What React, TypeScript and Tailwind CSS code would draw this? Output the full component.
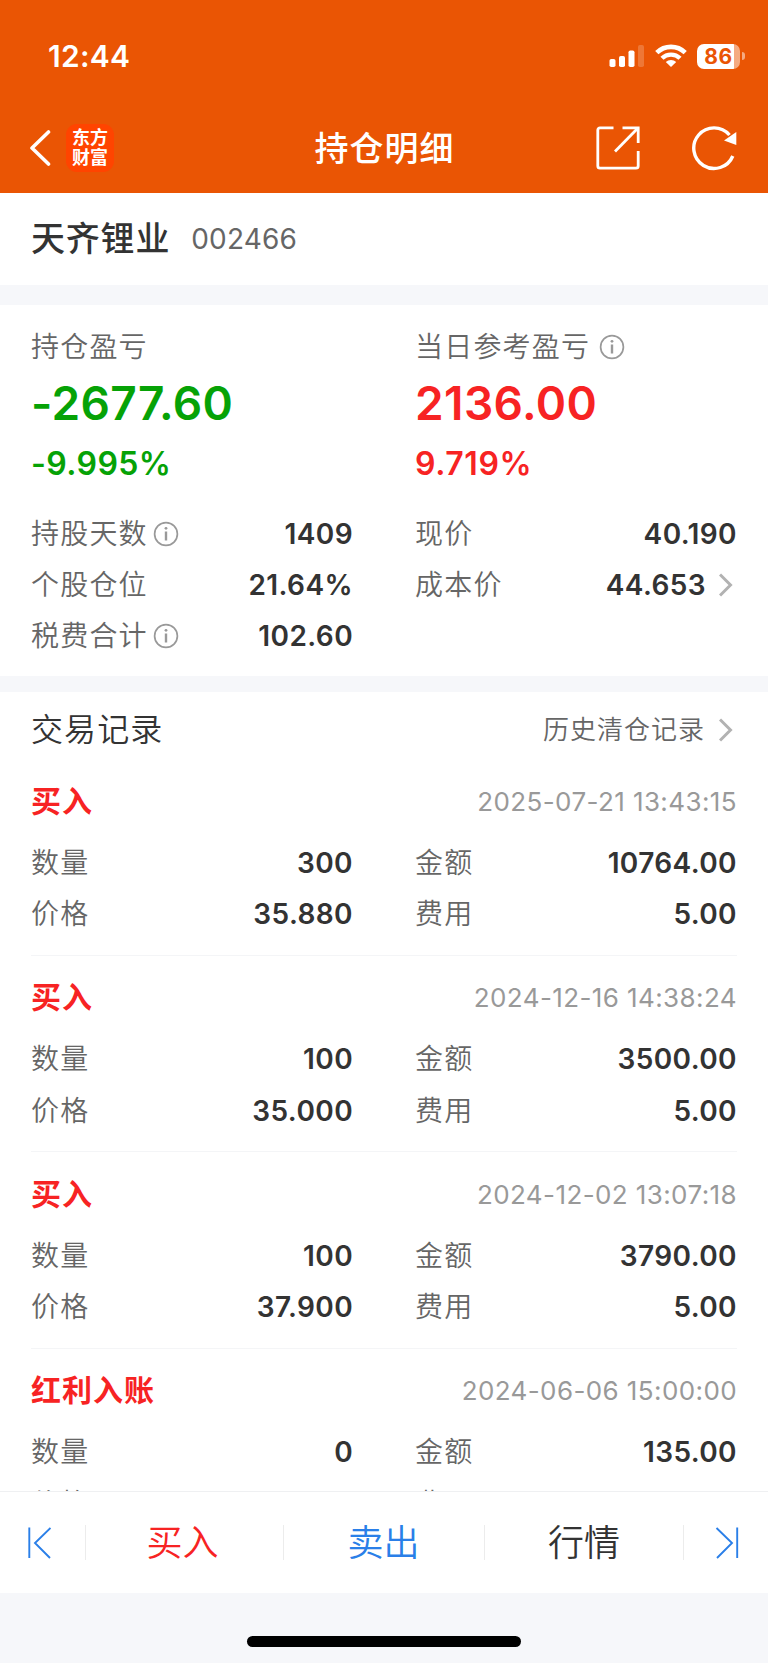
type Row = { label: string; value: string; info?: boolean; link?: boolean };

type Trade = {
  type: string;
  time: string;
  count: string;
  amount: string;
  price: string;
  fee: string;
};

const leftRows: Row[] = [
  { label: "持股天数", value: "1409", info: true },
  { label: "个股仓位", value: "21.64%" },
  { label: "税费合计", value: "102.60", info: true },
];

const rightRows: Row[] = [
  { label: "现价", value: "40.190" },
  { label: "成本价", value: "44.653", link: true },
];

const trades: Trade[] = [
  { type: "买入", time: "2025-07-21 13:43:15", count: "300", amount: "10764.00", price: "35.880", fee: "5.00" },
  { type: "买入", time: "2024-12-16 14:38:24", count: "100", amount: "3500.00", price: "35.000", fee: "5.00" },
  { type: "买入", time: "2024-12-02 13:07:18", count: "100", amount: "3790.00", price: "37.900", fee: "5.00" },
  { type: "红利入账", time: "2024-06-06 15:00:00", count: "0", amount: "135.00", price: "0.000", fee: "0.00" },
];

const InfoIcon = () => (
  <svg width="26" height="26" viewBox="0 0 26 26" fill="none" className="shrink-0">
    <circle cx="13" cy="13" r="11.4" stroke="#999" strokeWidth="1.7" />
    <path d="M13 10.5V19.5" stroke="#999" strokeWidth="2.4" />
    <circle cx="13" cy="7.3" r="1.4" fill="#999" />
  </svg>
);

const Chevron = () => (
  <svg width="14" height="24" viewBox="0 0 14 24" fill="none" className="shrink-0">
    <path d="M1 1.5L11.5 12L1 22.5" stroke="#b2b2b2" strokeWidth="3" />
  </svg>
);

const StatusBar = () => (
  <div className="flex h-[104px] items-center justify-between pt-[8px] pr-[23px] pl-12">
    <span className="text-[30px] leading-none font-semibold tracking-[0.3px]">12:44</span>
    <div className="flex items-center">
      <svg width="36" height="24" viewBox="0 0 36 24" fill="#fff">
        <rect x="0.5" y="15" width="6" height="8" rx="1.8" />
        <rect x="10" y="12" width="6" height="11" rx="1.8" />
        <rect x="19.5" y="6.5" width="6" height="16.5" rx="1.8" />
        <rect x="29" y="1" width="6" height="22" rx="1.8" opacity="0.2" />
      </svg>
      <svg width="32" height="24" viewBox="0 0 32 24" fill="none" className="ml-[10px]">
        <path d="M1.8 8.7A20.3 20.3 0 0 1 30.2 8.7" stroke="#fff" strokeWidth="4.6" />
        <path d="M7 14.3A12.8 12.8 0 0 1 25 14.3" stroke="#fff" strokeWidth="4.4" />
        <path d="M16 23L10.8 18.1A7.4 7.4 0 0 1 21.2 18.1Z" fill="#fff" />
      </svg>
      <div className="ml-[10px] flex h-[25px] w-[43px] items-center justify-center overflow-hidden rounded-[7px] bg-linear-to-r from-white from-86% to-white/50 to-86%">
        <span className="text-[21px] leading-none font-bold tracking-[0.6px] text-[#ea5504]">86</span>
      </div>
      <div className="ml-[2px] h-2 w-[3px] rounded-r-full bg-white/50" />
    </div>
  </div>
);

const NavBar = () => (
  <div className="grid h-[88px] grid-cols-3 items-center pr-[31px] pl-[29px]">
    <div className="flex items-center">
      <svg width="22" height="38" viewBox="0 0 22 38" fill="none">
        <path d="M19.5 3L3 19L19.5 35" stroke="#fff" strokeWidth="3.6" strokeLinecap="round" strokeLinejoin="round" />
      </svg>
      <div className="ml-[15px] flex h-12 w-12 flex-col items-center justify-center rounded-[11px] bg-[#ff4400] text-[18px] leading-[20px] font-bold">
        <span>东方</span>
        <span>财富</span>
      </div>
    </div>
    <h1 className="pt-[2px] pl-[3px] text-center text-[34px] leading-none font-medium tracking-[1px] whitespace-nowrap">
      持仓明细
    </h1>
    <div className="flex items-center justify-end">
      <svg width="44" height="44" viewBox="0 0 44 44" fill="none" stroke="#fff" strokeWidth="2.8">
        <path d="M17.5 1.8H4A2.2 2.2 0 0 0 1.8 4V40A2.2 2.2 0 0 0 4 42.2H40A2.2 2.2 0 0 0 42.2 40V25" />
        <path d="M26.5 1.8H42.2V17" />
        <path d="M19 25.5L41.5 2.5" />
      </svg>
      <svg width="46" height="46" viewBox="0 0 46 46" fill="none" className="ml-[51px]">
        <path d="M38.5 10A20.3 20.3 0 1 0 41.8 31" stroke="#fff" strokeWidth="3.4" />
        <path d="M45.3 7V20L33 15.5Z" fill="#fff" />
      </svg>
    </div>
  </div>
);

const DetailRow = ({ label, value, info, link }: Row) => (
  <div className="flex h-[51.3px] items-center justify-between">
    <span className="flex items-center gap-[5px] text-[28px] font-[350] tracking-[1.2px] text-[#666]">
      {label}
      {info && <InfoIcon />}
    </span>
    <span className="-mr-px flex items-center text-[28px] font-semibold tracking-[0.4px] text-[#333]">
      {value}
      {link && (
        <span className="mr-1 ml-[13px]">
          <Chevron />
        </span>
      )}
    </span>
  </div>
);

const TradeItem = ({ trade }: { trade: Trade }) => (
  <div className="mx-[31px] h-[196.4px] shrink-0 border-b border-[#f4f5f7] pt-4">
    <div className="mb-[10px] flex h-[52px] items-center justify-between">
      <span className="text-[30px] font-bold tracking-[1px] text-[#f72323]">{trade.type}</span>
      <span className="text-[26px] tracking-[0.4px] text-[#999]">{trade.time}</span>
    </div>
    <div className="grid grid-cols-2 gap-x-[63px] pr-px">
      <DetailRow label="数量" value={trade.count} />
      <DetailRow label="金额" value={trade.amount} />
      <DetailRow label="价格" value={trade.price} />
      <DetailRow label="费用" value={trade.fee} />
    </div>
  </div>
);

const Summary = () => (
  <div className="grid h-[371px] grid-cols-2 gap-x-[63px] bg-white pt-[19px] pr-8 pl-[31px]">
    <div>
      <div className="flex h-[46px] items-center text-[28px] font-[350] tracking-[1.2px] text-[#666]">
        持仓盈亏
      </div>
      <div className="flex h-[67px] items-center text-[46px] font-semibold tracking-[0.3px] text-[#06a206]">-2677.60</div>
      <div className="mb-[18px] flex h-[53px] items-center text-[32px] font-semibold tracking-[0.4px] text-[#06a206]">-9.995%</div>
      {leftRows.map((row) => (
        <DetailRow key={row.label} {...row} />
      ))}
    </div>
    <div>
      <div className="flex h-[46px] items-center gap-[9px] text-[28px] font-[350] tracking-[1.2px] text-[#666]">
        当日参考盈亏
        <InfoIcon />
      </div>
      <div className="flex h-[67px] items-center text-[46px] font-semibold tracking-[0.4px] text-[#f72323]">2136.00</div>
      <div className="mb-[18px] flex h-[53px] items-center text-[32px] font-semibold tracking-[0.6px] text-[#f72323]">9.719%</div>
      {rightRows.map((row) => (
        <DetailRow key={row.label} {...row} />
      ))}
    </div>
  </div>
);

const BottomBar = () => (
  <div className="flex h-[102px] shrink-0 items-center border-t border-[#eff0f2] bg-white text-[36px] font-[350]">
    <button className="flex h-[35px] w-[86px] items-center border-r border-[#ececec] pl-[27px]">
      <svg width="24" height="32" viewBox="0 0 24 32" fill="none" stroke="#2a7fe8" strokeWidth="1.9">
        <path d="M2.3 0.5V31M23.5 1L8 16L23 31" />
      </svg>
    </button>
    <button className="flex h-[35px] w-[198px] items-center justify-center border-r border-[#ececec] pr-1 text-[#f72323]">
      买入
    </button>
    <button className="flex h-[35px] w-[201px] items-center justify-center border-r border-[#ececec] pr-px text-[#2a7fe8]">
      卖出
    </button>
    <button className="flex h-[35px] w-[199px] items-center justify-center border-r border-[#ececec] text-[#333]">
      行情
    </button>
    <button className="flex h-[35px] flex-1 items-center pl-[31px]">
      <svg width="24" height="32" viewBox="0 0 24 32" fill="none" stroke="#2a7fe8" strokeWidth="1.9">
        <path d="M22.2 0.5V31M1.5 1L17 16L2 31" />
      </svg>
    </button>
  </div>
);

const App = () => {
  return (
    <div className="flex h-[1663px] w-[768px] flex-col overflow-hidden bg-[#f6f7fa] font-[Inter,'Noto_Sans_CJK_SC',sans-serif]">
      <header className="h-[192.5px] shrink-0 bg-[#ea5504] text-white">
        <StatusBar />
        <NavBar />
      </header>

      {/* Stock name */}
      <div className="mb-5 flex h-[92.5px] shrink-0 items-center gap-[21px] bg-white px-[31px]">
        <span className="text-[34px] font-medium tracking-[0.8px] text-[#333]">天齐锂业</span>
        <span className="text-[28px] tracking-[0.2px] text-[#666]">002466</span>
      </div>

      <Summary />

      {/* Trade records */}
      <div className="mt-4 flex min-h-0 flex-1 flex-col overflow-hidden bg-white">
        <div className="flex h-[67.4px] shrink-0 items-center justify-between px-[31px] pt-[8px]">
          <span className="text-[32px] font-[350] tracking-[1.1px] text-[#333]">交易记录</span>
          <span className="flex items-center text-[26px] font-[350] tracking-[1px] text-[#666]">
            历史清仓记录
            <span className="mr-1 ml-[14px]">
              <Chevron />
            </span>
          </span>
        </div>
        {trades.map((trade) => (
          <TradeItem key={trade.time} trade={trade} />
        ))}
      </div>

      <BottomBar />

      {/* Home indicator */}
      <div className="flex h-[70px] shrink-0 justify-center pt-[43px]">
        <div className="h-[11px] w-[274px] rounded-full bg-black" />
      </div>
    </div>
  );
};

export default App;
